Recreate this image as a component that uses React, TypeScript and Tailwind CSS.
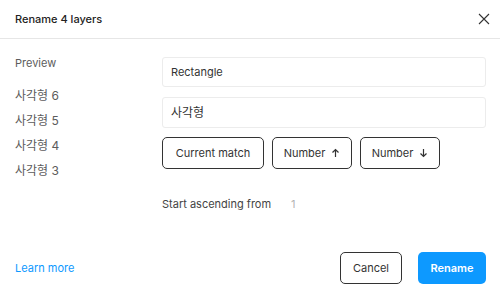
const font = "font-['Inter','Noto_Sans_CJK_KR',sans-serif]";

function Arrow({ down }: { down?: boolean }) {
  return (
    <svg width="9" height="10" viewBox="0 0 9 10" fill="none" className={down ? "rotate-180" : ""}>
      <path d="M4.5 9V1.5M1.5 4.5L4.5 1.5L7.5 4.5" stroke="#333" strokeWidth="1.2" />
    </svg>
  );
}

const layers = ["사각형 6", "사각형 5", "사각형 4", "사각형 3"];

export default function App() {
  return (
    <div className={`${font} flex h-[298px] w-[500px] flex-col bg-white text-[11px] text-[#333]`}>
      {/* Header */}
      <div className="flex h-[39px] items-center justify-between border-b border-[#e6e6e6] pl-[15px] pr-[4px]">
        <span className="text-[11px] font-medium text-[#222]">Rename 4 layers</span>
        <button className="flex h-[24px] w-[24px] items-center justify-center">
          <svg width="12" height="12" viewBox="0 0 12 12" fill="none">
            <path d="M1 1L11 11M11 1L1 11" stroke="#333" strokeWidth="1.1" />
          </svg>
        </button>
      </div>

      {/* Body */}
      <div className="flex flex-1">
        <div className="flex w-[162px] flex-col pl-[15px] pt-[17px] text-[#5c5c5c]">
          <div className="h-[14px] leading-[14px]">Preview</div>
          <div className="mt-[19px] flex flex-col gap-[11px]">
            {layers.map((l) => (
              <div key={l} className="h-[14px] text-[12px] leading-[14px]">
                {l}
              </div>
            ))}
          </div>
        </div>

        <div className="flex w-[324px] flex-col pt-[18px]">
          <div className="flex h-[30px] items-center rounded-[3px] border border-[#ececec] px-[8px]">
            Rectangle
          </div>
          <div className="mt-[10px] flex h-[31px] items-center rounded-[3px] border border-[#ececec] px-[8px] text-[12px]">
            사각형
          </div>
          <div className="mt-[9px] flex gap-[8px]">
            <button className="h-[32px] w-[102px] rounded-[5px] border border-[#333]">Current match</button>
            <button className="flex h-[32px] w-[80px] items-center justify-center gap-[6px] rounded-[5px] border border-[#333]">
              Number <Arrow />
            </button>
            <button className="flex h-[32px] w-[80px] items-center justify-center gap-[6px] rounded-[5px] border border-[#333]">
              Number <Arrow down />
            </button>
          </div>
          <div className="mt-[28px] flex items-center leading-[14px]">
            <span className="text-[#444]">Start ascending from</span>
            <span className="ml-[20px] text-[#b3b3b3]">1</span>
          </div>
        </div>
      </div>

      {/* Footer */}
      <div className="flex items-center justify-between pb-[14px] pl-[15px] pr-[14px]">
        <a className="text-[#0d99ff]">Learn more</a>
        <div className="flex gap-[16px]">
          <button className="h-[32px] w-[62px] rounded-[5px] border border-[#333]">Cancel</button>
          <button className="h-[32px] w-[68px] rounded-[5px] bg-[#0d99ff] font-semibold text-white">Rename</button>
        </div>
      </div>
    </div>
  );
}
